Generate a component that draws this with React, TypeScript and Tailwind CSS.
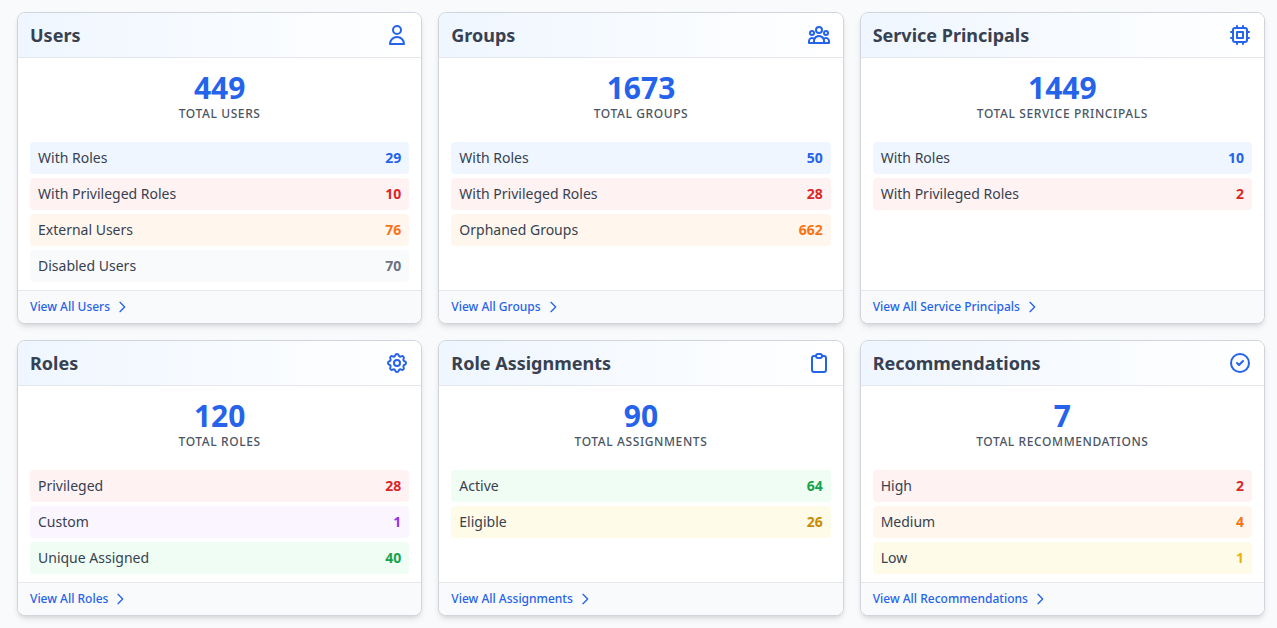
import type { IconType } from 'react-icons';
import {
  HiOutlineUser,
  HiOutlineUserGroup,
  HiOutlineChip,
  HiOutlineCog,
  HiOutlineClipboard,
  HiOutlineCheckCircle,
  HiOutlineChevronRight,
} from 'react-icons/hi';

type Tone = 'blue' | 'red' | 'orange' | 'gray' | 'purple' | 'green' | 'amber' | 'yellow';

interface Stat {
  label: string;
  value: number;
  tone: Tone;
}

interface Summary {
  title: string;
  icon: IconType;
  total: number;
  totalLabel: string;
  stats: Stat[];
  link: string;
  href: string;
}

const ROW_COLORS: Record<Tone, string> = {
  blue: 'bg-[#eff6ff]',
  red: 'bg-[#fef2f2]',
  orange: 'bg-[#fff7ed]',
  gray: 'bg-[#f9fafb]',
  purple: 'bg-[#faf5ff]',
  green: 'bg-[#f0fdf4]',
  amber: 'bg-[#fefce8]',
  yellow: 'bg-[#fefce8]',
};

const VALUE_COLORS: Record<Tone, string> = {
  blue: 'text-[#2563eb]',
  red: 'text-[#dc2626]',
  orange: 'text-[#f97316]',
  gray: 'text-[#6b7280]',
  purple: 'text-[#9333ea]',
  green: 'text-[#16a34a]',
  amber: 'text-[#ca8a04]',
  yellow: 'text-[#eab308]',
};

const SUMMARIES: Summary[] = [
  {
    title: 'Users',
    icon: HiOutlineUser,
    total: 449,
    totalLabel: 'Total Users',
    stats: [
      { label: 'With Roles', value: 29, tone: 'blue' },
      { label: 'With Privileged Roles', value: 10, tone: 'red' },
      { label: 'External Users', value: 76, tone: 'orange' },
      { label: 'Disabled Users', value: 70, tone: 'gray' },
    ],
    link: 'View All Users',
    href: '#users',
  },
  {
    title: 'Groups',
    icon: HiOutlineUserGroup,
    total: 1673,
    totalLabel: 'Total Groups',
    stats: [
      { label: 'With Roles', value: 50, tone: 'blue' },
      { label: 'With Privileged Roles', value: 28, tone: 'red' },
      { label: 'Orphaned Groups', value: 662, tone: 'orange' },
    ],
    link: 'View All Groups',
    href: '#groups',
  },
  {
    title: 'Service Principals',
    icon: HiOutlineChip,
    total: 1449,
    totalLabel: 'Total Service Principals',
    stats: [
      { label: 'With Roles', value: 10, tone: 'blue' },
      { label: 'With Privileged Roles', value: 2, tone: 'red' },
    ],
    link: 'View All Service Principals',
    href: '#service-principals',
  },
  {
    title: 'Roles',
    icon: HiOutlineCog,
    total: 120,
    totalLabel: 'Total Roles',
    stats: [
      { label: 'Privileged', value: 28, tone: 'red' },
      { label: 'Custom', value: 1, tone: 'purple' },
      { label: 'Unique Assigned', value: 40, tone: 'green' },
    ],
    link: 'View All Roles',
    href: '#roles',
  },
  {
    title: 'Role Assignments',
    icon: HiOutlineClipboard,
    total: 90,
    totalLabel: 'Total Assignments',
    stats: [
      { label: 'Active', value: 64, tone: 'green' },
      { label: 'Eligible', value: 26, tone: 'amber' },
    ],
    link: 'View All Assignments',
    href: '#assignments',
  },
  {
    title: 'Recommendations',
    icon: HiOutlineCheckCircle,
    total: 7,
    totalLabel: 'Total Recommendations',
    stats: [
      { label: 'High', value: 2, tone: 'red' },
      { label: 'Medium', value: 4, tone: 'orange' },
      { label: 'Low', value: 1, tone: 'yellow' },
    ],
    link: 'View All Recommendations',
    href: '#recommendations',
  },
];

function SummaryCard({ summary }: { summary: Summary }) {
  const Icon = summary.icon;

  return (
    <section className="flex flex-col overflow-hidden rounded-lg border border-[#d1d5db] bg-white shadow-md">
      <div className="flex items-center justify-between px-3 py-2 border-b border-[#e5e7eb] bg-linear-to-r/srgb from-[#eff6ff] to-white">
        <h2 className="text-lg font-bold text-[#374151]">{summary.title}</h2>
        <Icon className="w-6 h-6 text-[#2563eb]" />
      </div>

      <div className="flex-1 px-3 pt-3 pb-2">
        <div className="mb-5 text-center">
          <p className="text-3xl font-bold text-[#2563eb]">{summary.total}</p>
          <p className="text-xs font-medium uppercase tracking-wider text-[#4b5563]">{summary.totalLabel}</p>
        </div>
        <dl className="space-y-1">
          {summary.stats.map(stat => (
            <div key={stat.label} className={`flex items-center justify-between px-2 py-1.5 rounded text-sm ${ROW_COLORS[stat.tone]}`}>
              <dt className="text-[#374151]">{stat.label}</dt>
              <dd className={`font-bold ${VALUE_COLORS[stat.tone]}`}>{stat.value}</dd>
            </div>
          ))}
        </dl>
      </div>

      <div className="flex px-3 py-2 border-t border-[#e5e7eb] bg-[#f9fafb]">
        <a href={summary.href} className="flex items-center gap-1 text-xs font-medium text-[#2563eb] hover:text-[#1e40af]">
          {summary.link}
          <HiOutlineChevronRight className="w-4 h-4" />
        </a>
      </div>
    </section>
  );
}

export default function App() {
  return (
    <main className="min-h-screen bg-[#f9fafb] py-3 pl-[17px] pr-3 font-['Noto_Sans',sans-serif]">
      <div className="grid grid-cols-1 sm:grid-cols-2 lg:grid-cols-3 gap-4">
        {SUMMARIES.map(summary => (
          <SummaryCard key={summary.title} summary={summary} />
        ))}
      </div>
    </main>
  );
}
